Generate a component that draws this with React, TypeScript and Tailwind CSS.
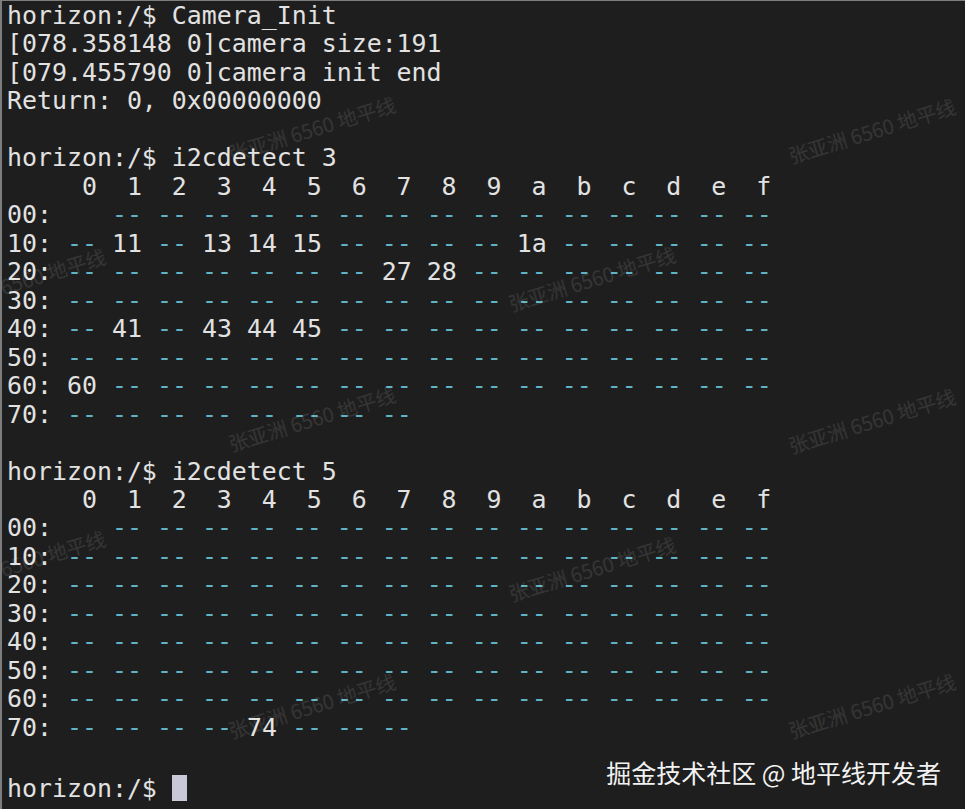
const mono = { fontFamily: '"DejaVu Sans Mono", "Liberation Mono", monospace' };

const head = '     0  1  2  3  4  5  6  7  8  9  a  b  c  d  e  f';

function row(prefix: string, cells: string[], skip = 0) {
  return { prefix, cells, skip };
}

const dashes = (n: number) => Array.from({ length: n }, () => '--');

const bus3 = [
  row('00:', dashes(15), 1),
  row('10:', ['--', '11', '--', '13', '14', '15', '--', '--', '--', '--', '1a', '--', '--', '--', '--', '--']),
  row('20:', ['--', '--', '--', '--', '--', '--', '--', '27', '28', '--', '--', '--', '--', '--', '--', '--']),
  row('30:', dashes(16)),
  row('40:', ['--', '41', '--', '43', '44', '45', '--', '--', '--', '--', '--', '--', '--', '--', '--', '--']),
  row('50:', dashes(16)),
  row('60:', ['60', ...dashes(15)]),
  row('70:', dashes(8)),
];

const bus5 = [
  row('00:', dashes(15), 1),
  row('10:', dashes(16)),
  row('20:', dashes(16)),
  row('30:', dashes(16)),
  row('40:', dashes(16)),
  row('50:', dashes(16)),
  row('60:', dashes(16)),
  row('70:', ['--', '--', '--', '--', '74', '--', '--', '--']),
];

function Line({ children }: { children?: React.ReactNode }) {
  return <div className="h-[28.48px] whitespace-pre leading-[28.48px]">{children ?? ' '}</div>;
}

function TableRow({ r }: { r: { prefix: string; cells: string[]; skip: number } }) {
  return (
    <Line>
      {r.prefix}
      {'   '.repeat(r.skip)}
      {r.cells.map((c, i) => (
        <span key={i}>
          {' '}
          {c === '--' ? <span className="text-[#5fb3c4]">--</span> : c}
        </span>
      ))}
    </Line>
  );
}

// watermark tiles, partly off the left edge like the source
const marks: [number, number][] = [
  [310, 128], [870, 130],
  [20, 280], [590, 278],
  [310, 418], [870, 420],
  [20, 562], [590, 568],
  [310, 705], [870, 705],
];

export default function App() {
  return (
    <div className="relative h-[809px] w-[965px] overflow-hidden border-l-2 border-t border-[#7d7d7d] bg-[#1e1e1e] pl-[5px] pt-[1px] text-[24.9px] text-[#e2e2e2]" style={mono}>
      <Line>horizon:/$ Camera_Init</Line>
      <Line>[078.358148 0]camera size:191</Line>
      <Line>[079.455790 0]camera init end</Line>
      <Line>Return: 0, 0x00000000</Line>
      <Line />
      <Line>horizon:/$ i2cdetect 3</Line>
      <Line>{head}</Line>
      {bus3.map((r) => (
        <TableRow key={'a' + r.prefix} r={r} />
      ))}
      <Line />
      <Line>horizon:/$ i2cdetect 5</Line>
      <Line>{head}</Line>
      {bus5.map((r) => (
        <TableRow key={'b' + r.prefix} r={r} />
      ))}
      <Line />
      <Line>
        horizon:/$ <span className="inline-block h-[26px] w-[15px] translate-y-[4px] bg-[#c8c8d6] align-baseline" />
      </Line>

      {marks.map(([x, y], i) => (
        <div
          key={i}
          className="pointer-events-none absolute whitespace-nowrap text-[20px] text-white/10"
          style={{ left: x, top: y, transform: 'translate(-50%, -50%) rotate(-17deg)', fontFamily: '"Noto Sans CJK SC", sans-serif' }}
        >
          张亚洲 6560 地平线
        </div>
      ))}

      <div className="absolute right-[24px] top-[755px] whitespace-nowrap text-[25px] leading-[32px] text-[#f2f2f2]" style={{ fontFamily: '"Noto Sans CJK SC", sans-serif' }}>
        掘金技术社区 @ 地平线开发者
      </div>
    </div>
  );
}
